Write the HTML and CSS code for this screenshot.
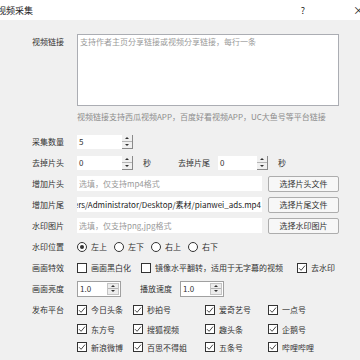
FILE: index.html
```html
<!DOCTYPE html>
<html lang="zh-CN">
<head>
    <meta charset="UTF-8">
    <title>视频采集</title>
    <link rel="stylesheet" href="styles.css">
</head>
<body>
    <div class="titlebar">
        <span class="title">视频采集</span>
        <span class="help">?</span>
        <span class="close">×</span>
    </div>

    <div class="dialog">
        <!-- 链接 -->
        <div class="row row-top">
            <label class="lbl">视频链接</label>
            <textarea class="links" placeholder="支持作者主页分享链接或视频分享链接，每行一条"></textarea>
        </div>
        <p class="hint">视频链接支持西瓜视频APP，百度好看视频APP，UC大鱼号等平台链接</p>

        <div class="row">
            <label class="lbl">采集数量</label>
            <div class="spin spin-a"><span class="spin-val">5</span><span class="spin-btns"><i class="up"></i><i class="down"></i></span></div>
        </div>

        <div class="row">
            <label class="lbl">去掉片头</label>
            <div class="spin spin-a"><span class="spin-val">0</span><span class="spin-btns"><i class="up"></i><i class="down"></i></span></div>
            <span class="unit">秒</span>
            <label class="lbl lbl-inline">去掉片尾</label>
            <div class="spin spin-b"><span class="spin-val">0</span><span class="spin-btns"><i class="up"></i><i class="down"></i></span></div>
            <span class="unit">秒</span>
        </div>

        <div class="row">
            <label class="lbl">增加片头</label>
            <input class="field" type="text" placeholder="选填，仅支持mp4格式">
            <button class="btn" type="button">选择片头文件</button>
        </div>

        <div class="row">
            <label class="lbl">增加片尾</label>
            <div class="field field-path">ers/Administrator/Desktop/素材/pianwei_ads.mp4</div>
            <button class="btn" type="button">选择片尾文件</button>
        </div>

        <div class="row">
            <label class="lbl">水印图片</label>
            <input class="field" type="text" placeholder="选填，仅支持png,jpg格式">
            <button class="btn" type="button">选择水印图片</button>
        </div>

        <div class="row">
            <label class="lbl">水印位置</label>
            <div class="opts">
                <span class="opt"><i class="radio on"></i>左上</span>
                <span class="opt"><i class="radio"></i>左下</span>
                <span class="opt"><i class="radio"></i>右上</span>
                <span class="opt"><i class="radio"></i>右下</span>
            </div>
        </div>

        <div class="row">
            <label class="lbl">画面特效</label>
            <span class="opt fx-1"><i class="cb"></i>画面黑白化</span>
            <span class="opt fx-2"><i class="cb"></i>镜像水平翻转，适用于无字幕的视频</span>
            <span class="opt"><i class="cb on"><svg viewBox="0 0 8 8"><path d="M1 4.2 L3.1 6.3 L7 1.6" fill="none" stroke="#333" stroke-width="0.9"/></svg></i>去水印</span>
        </div>

        <div class="row">
            <label class="lbl">画面亮度</label>
            <div class="spin spin-box"><span class="spin-val">1.0</span><span class="spin-btns"><i class="up"></i><i class="down"></i></span></div>
            <label class="lbl lbl-speed">播放速度</label>
            <div class="spin spin-box"><span class="spin-val">1.0</span><span class="spin-btns"><i class="up"></i><i class="down"></i></span></div>
        </div>

        <div class="row row-top">
            <label class="lbl lbl-tall">发布平台</label>
            <div class="platforms" id="platforms"></div>
        </div>
    </div>

    <script>
        const platforms = [
            '今日头条', '秒拍号', '爱奇艺号', '一点号',
            '东方号', '搜狐视频', '趣头条', '企鹅号',
            '新浪微博', '百思不得姐', '五条号', '哔哩哔哩'
        ];

        const tick = '<svg viewBox="0 0 8 8"><path d="M1 4.2 L3.1 6.3 L7 1.6" fill="none" stroke="#333" stroke-width="0.9"/></svg>';
        const box = document.getElementById('platforms');

        platforms.forEach(name => {
            box.insertAdjacentHTML('beforeend', `<span class="opt"><i class="cb on">${tick}</i>${name}</span>`);
        });
    </script>
</body>
</html>
```

FILE: styles.css
```css
body {
    margin: 0;
    width: 360px;
    height: 360px;
    overflow: hidden;
    background: #f0f0f0;
    font-family: "Noto Sans CJK SC", "Noto Sans", sans-serif;
    font-size: 8px;
    color: #333;
}

.titlebar {
    height: 20px;
    background: #fff;
    display: flex;
    align-items: center;
    font-size: 9px;
    color: #222;
}

.title {
    flex: 1;
    margin-left: -3px;
}

.help {
    margin-right: 48px;
}

.close {
    margin-right: -4px;
    font-size: 11px;
}

.dialog {
    padding: 14px 21px 0 32px;
}

.row {
    display: flex;
    align-items: center;
    height: 21px;
}

.row-top {
    align-items: flex-start;
    height: auto;
}

.lbl {
    flex: none;
    width: 32px;
    margin-right: 13px;
    text-align: right;
    white-space: nowrap;
}

.row-top .lbl {
    padding-top: 2px;
}

.row-top .lbl-tall {
    padding-top: 0;
    line-height: 21px;
}

.links {
    width: 262px;
    height: 72px;
    box-sizing: border-box;
    margin: 0;
    padding: 1px 2px;
    border: 1px solid #abadb3;
    background: #fff;
    resize: none;
    font: inherit;
    color: #333;
}

.links::placeholder,
.field::placeholder {
    color: #9a9a9a;
}

.hint {
    margin: 5px 0 8px 45px;
    height: 12px;
    line-height: 12px;
    color: #8c8c8c;
    white-space: nowrap;
}

/* spin boxes */
.spin {
    display: flex;
    height: 14px;
    background: #fff;
    box-sizing: border-box;
}

.spin-a {
    width: 56px;
}

.spin-b {
    width: 50px;
}

.spin-val {
    flex: 1;
    padding-left: 2px;
    line-height: 14px;
}

.spin-btns {
    flex: none;
    width: 10px;
    display: flex;
    flex-direction: column;
    background: #f0f0f0;
    border-right: 1px solid #8a8a8a;
    border-bottom: 1px solid #8a8a8a;
}

.spin-btns i {
    flex: 1;
    display: flex;
    align-items: center;
    justify-content: center;
}

.spin-btns .up {
    border-bottom: 1px solid #b5b5b5;
}

.spin-btns .up::before {
    content: "";
    border-left: 2px solid transparent;
    border-right: 2px solid transparent;
    border-bottom: 2px solid #333;
}

.spin-btns .down::before {
    content: "";
    border-left: 2px solid transparent;
    border-right: 2px solid transparent;
    border-top: 2px solid #333;
}

.spin-box {
    width: 44px;
    height: 16px;
    border: 1px solid #a0a0a0;
}

.spin-box .spin-val {
    line-height: 14px;
}

.spin-box .spin-btns {
    width: 10px;
    margin: 1px 1px 1px 0;
    border: 1px solid #c4c4c4;
    background: #ececec;
}

.unit {
    margin-left: 10px;
}

.lbl-inline {
    margin-left: 27px;
    margin-right: 8px;
}

.lbl-speed {
    margin-left: 19px;
    margin-right: 8px;
}

/* text fields and buttons */
.field {
    width: 185px;
    height: 15px;
    box-sizing: border-box;
    margin: 0;
    padding: 0 2px;
    border: none;
    background: #fff;
    font: inherit;
    color: #333;
}

.field-path {
    display: flex;
    justify-content: flex-end;
    align-items: center;
    overflow: hidden;
    white-space: nowrap;
    padding: 0 1px 0 0;
    color: #222;
}

.btn {
    margin-left: 6px;
    width: 71px;
    height: 16px;
    padding: 0;
    border: 1px solid #adadad;
    border-radius: 2px;
    background: #f7f7f7;
    font: inherit;
    color: #333;
}

/* radios and checkboxes */
.opts {
    display: flex;
}

.opt {
    display: inline-flex;
    align-items: center;
    white-space: nowrap;
}

.opts .opt {
    margin-right: 7px;
}

.radio {
    width: 8px;
    height: 8px;
    margin-right: 4px;
    border: 1px solid #333;
    border-radius: 50%;
    background: #fff;
    display: inline-flex;
    align-items: center;
    justify-content: center;
}

.radio.on::before {
    content: "";
    width: 4px;
    height: 4px;
    border-radius: 50%;
    background: #333;
}

.cb {
    width: 8px;
    height: 8px;
    margin-right: 4px;
    border: 1px solid #333;
    background: #fff;
    display: inline-flex;
}

.cb svg {
    width: 8px;
    height: 8px;
}

.fx-1 {
    width: 64px;
}

.fx-2 {
    width: 156px;
}

.platforms {
    display: grid;
    grid-template-columns: 56px 72px 63px auto;
    grid-template-rows: 21px;
    grid-auto-rows: 18px;
}
```
